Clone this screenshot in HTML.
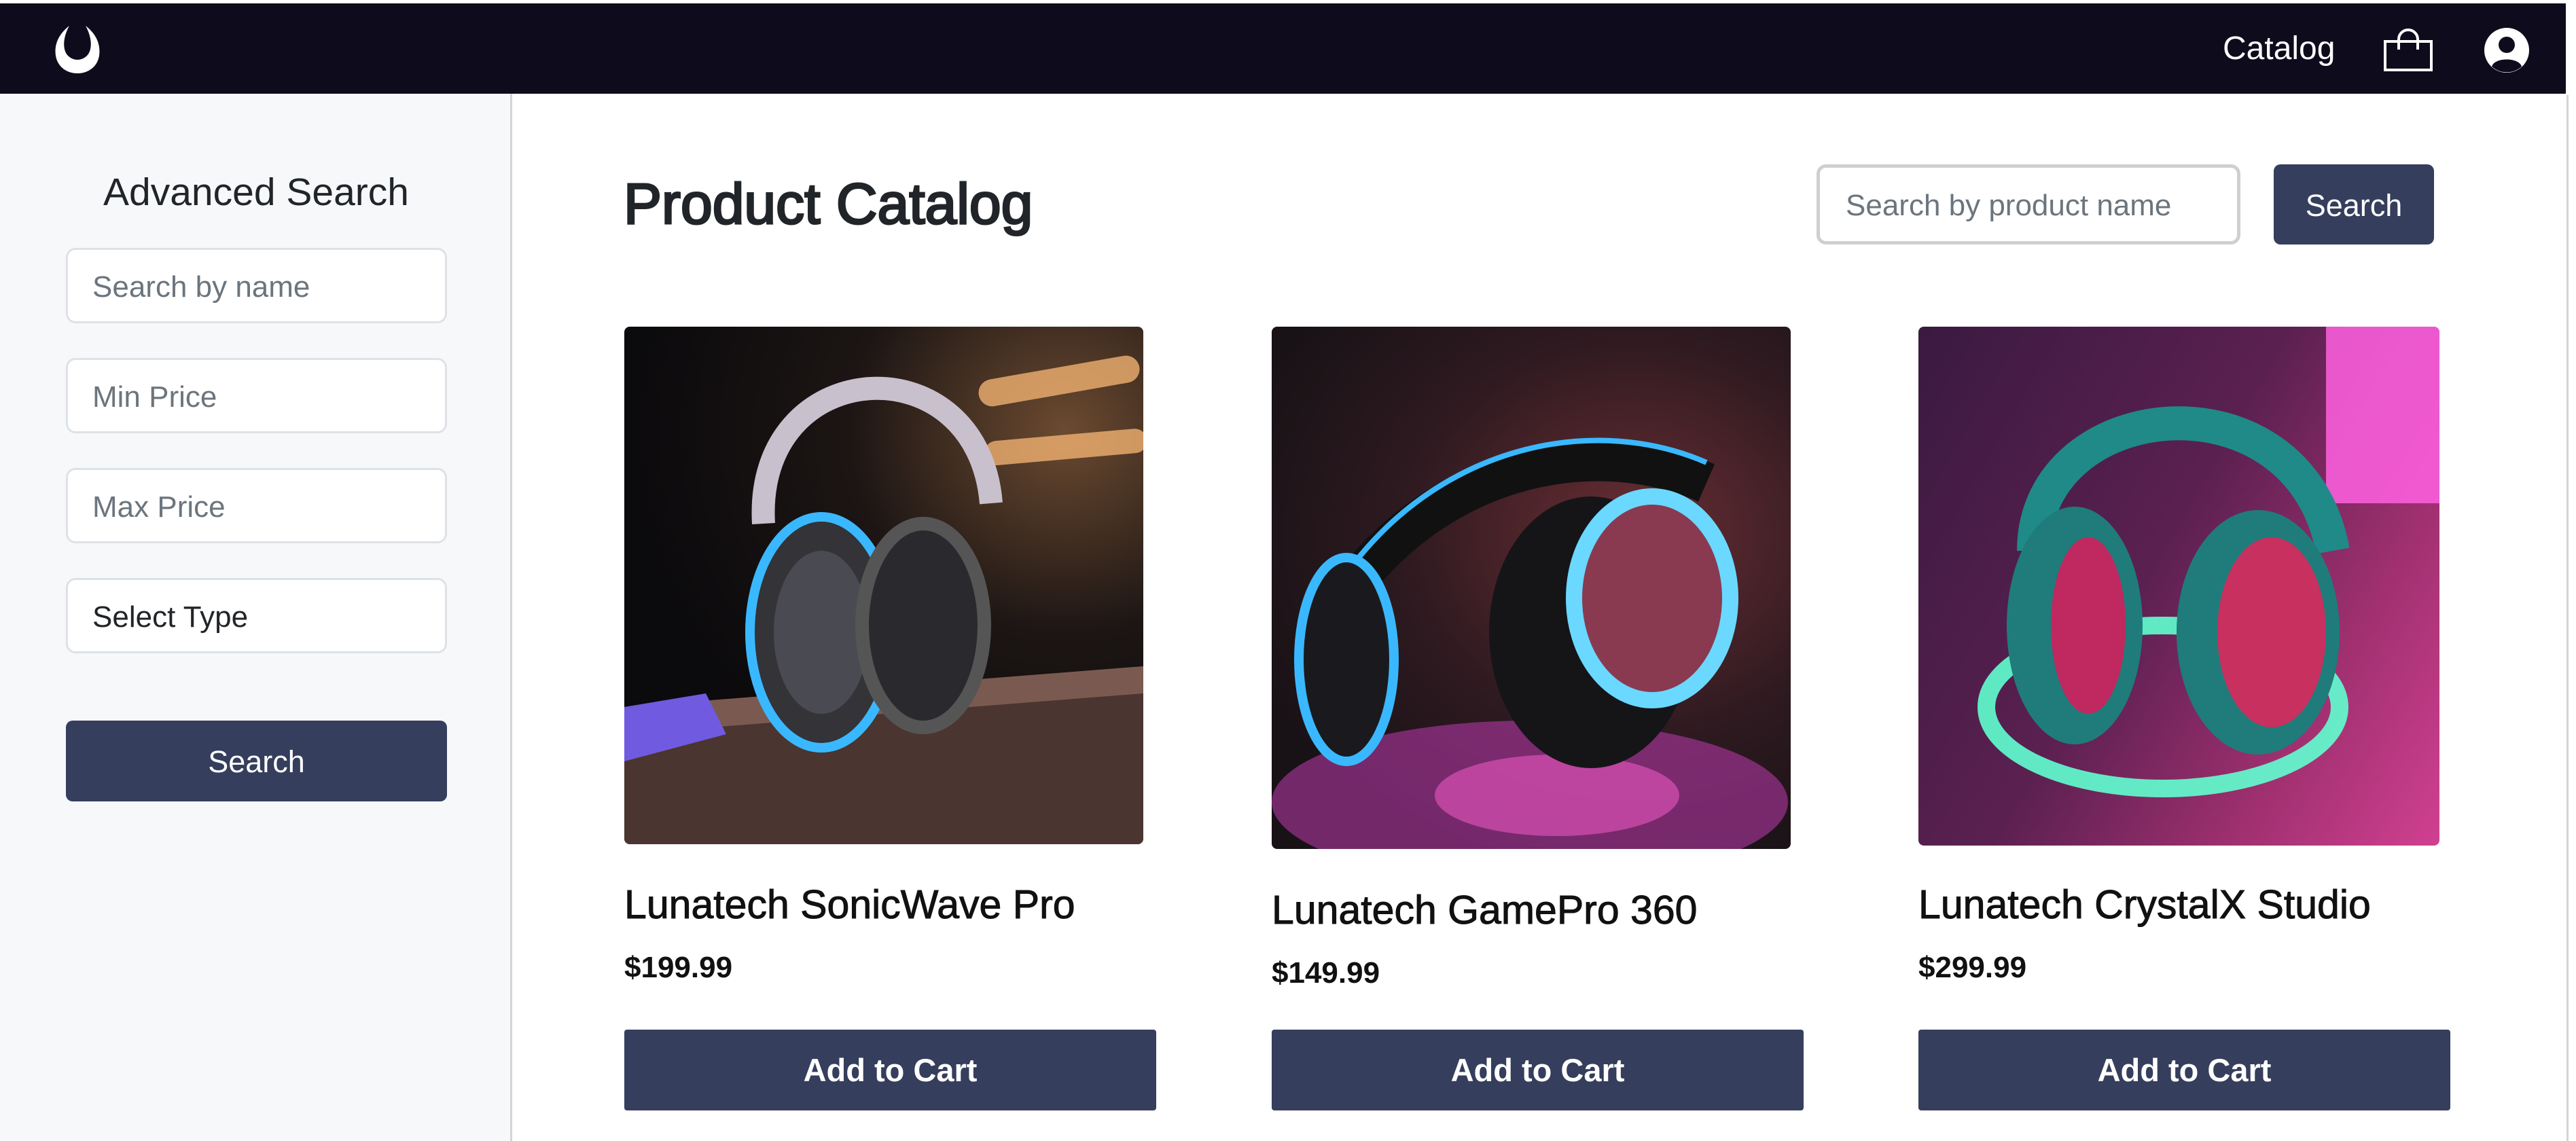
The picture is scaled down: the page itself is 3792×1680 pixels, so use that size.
<!DOCTYPE html>
<html><head><meta charset="utf-8"><style>
*{box-sizing:border-box;margin:0;padding:0}
body{width:3792px;height:1680px;overflow:hidden;background:#fff;font-family:"Liberation Sans",sans-serif;position:relative;color:#212529}
.nav{position:absolute;left:0;top:5px;width:3777px;height:133px;background:#0e0c1c}
.abs{position:absolute}
.side{position:absolute;left:0;top:138px;width:754px;height:1542px;background:#f7f8fa;border-right:3px solid #d4d4d4}
.inp{position:absolute;left:97px;width:561px;height:111px;background:#fff;border:3px solid #dee2e6;border-radius:14px;font-size:44px;color:#6c757d;padding-left:36px;line-height:109px}
.btn{position:absolute;background:#353e5c;color:#fff;border-radius:10px;text-align:center}
.img{position:absolute;border-radius:8px;overflow:hidden}
.title{position:absolute;font-size:59px;color:#111;white-space:nowrap;-webkit-text-stroke:1px #111}
.price{position:absolute;font-size:44px;font-weight:bold;color:#111}
.cart{position:absolute;width:783px;height:119px;background:#353e5c;color:#fff;font-size:47px;font-weight:bold;text-align:center;line-height:119px;border-radius:4px}
</style></head><body>
<div class="nav"></div>
<svg class="abs" style="left:78px;top:36px" width="72" height="74" viewBox="0 0 72 74"><path d="M24 2 C6 16 2 32 4 46 C7 64 22 72 36 72 C50 72 65 64 68 46 C70 32 66 16 48 2 C58 20 58 38 50 46 C42 54 30 54 22 46 C14 38 14 20 24 2Z" fill="#fff"/></svg>
<div class="abs" style="left:3272px;top:44px;font-size:48px;color:#fff">Catalog</div>
<svg class="abs" style="left:3508px;top:40px" width="74" height="66" viewBox="0 0 74 66"><rect x="3" y="21" width="68" height="42" fill="none" stroke="#fff" stroke-width="4"/><path d="M23 33 V18 A14 14 0 0 1 51 18 V33" fill="none" stroke="#fff" stroke-width="4"/></svg>
<svg class="abs" style="left:3656px;top:40px" width="68" height="68" viewBox="0 0 68 68"><circle cx="34" cy="34" r="33" fill="#fff"/><circle cx="34" cy="26" r="12" fill="#0e0c1c"/><path d="M12 58 C16 44 52 44 56 58 A33 33 0 0 1 12 58Z" fill="#0e0c1c"/></svg>
<div class="side"></div>
<div class="abs" style="left:0;width:754px;top:250px;text-align:center;font-size:57px;color:#212529">Advanced Search</div>
<div class="inp" style="top:365px">Search by name</div>
<div class="inp" style="top:527px">Min Price</div>
<div class="inp" style="top:689px">Max Price</div>
<div class="inp" style="top:851px;color:#212529">Select Type</div>
<div class="btn" style="left:97px;top:1061px;width:561px;height:119px;line-height:121px;font-size:45px">Search</div>
<div class="abs" style="left:918px;top:252px;font-size:84px;color:#212529;-webkit-text-stroke:3px #212529">Product Catalog</div>
<div class="abs" style="left:2674px;top:242px;width:624px;height:118px;border:5px solid #cfcfcf;border-radius:14px;font-size:44px;color:#6c757d;padding-left:38px;line-height:112px">Search by product name</div>
<div class="btn" style="left:3347px;top:242px;width:236px;height:118px;line-height:122px;font-size:45px">Search</div>

<div class="img" style="left:919px;top:481px;width:764px;height:762px;background:radial-gradient(ellipse at 85% 20%,#6b4a30 0%,#1c1514 35%,#0b0a0c 70%)">
<svg width="764" height="762" viewBox="0 0 764 762"><rect x="520" y="60" width="240" height="40" rx="20" fill="#f0b070" opacity=".8" transform="rotate(-10 640 80)"/><rect x="530" y="160" width="240" height="36" rx="18" fill="#f0b070" opacity=".8" transform="rotate(-5 640 180)"/><path d="M0 560 L764 500 L764 762 L0 762Z" fill="#4a3530"/><path d="M0 560 L764 500 L764 540 L0 600Z" fill="#7a5a50"/><path d="M0 560 L120 540 L150 600 L0 640Z" fill="#6f5ae0"/><path d="M205 290 C190 40 520 20 540 260" fill="none" stroke="#c8c0cc" stroke-width="34"/><ellipse cx="290" cy="450" rx="105" ry="170" fill="#333338" stroke="#3ab8ff" stroke-width="14"/><ellipse cx="290" cy="450" rx="70" ry="120" fill="#4a4a52"/><ellipse cx="440" cy="440" rx="90" ry="150" fill="#2a2a2e" stroke="#555" stroke-width="20"/></svg></div>

<div class="img" style="left:1872px;top:481px;width:764px;height:769px;background:radial-gradient(ellipse at 70% 40%,#6a2e34 0%,#2e1a20 45%,#181216 80%)">
<svg width="764" height="769" viewBox="0 0 764 769"><ellipse cx="380" cy="700" rx="380" ry="120" fill="#c03ab0" opacity=".55"/><ellipse cx="420" cy="690" rx="180" ry="60" fill="#ff5fd0" opacity=".5"/><path d="M120 380 C260 200 480 160 640 230" fill="none" stroke="#111" stroke-width="60"/><path d="M120 350 C260 170 480 130 640 200" fill="none" stroke="#3ab8ff" stroke-width="8"/><ellipse cx="110" cy="490" rx="70" ry="150" fill="#1a1a1e" stroke="#3ab8ff" stroke-width="14"/><ellipse cx="470" cy="450" rx="150" ry="200" fill="#151518"/><ellipse cx="560" cy="400" rx="115" ry="150" fill="#8a3a50" stroke="#6ad8ff" stroke-width="24"/></svg></div>

<div class="img" style="left:2824px;top:481px;width:767px;height:764px;background:linear-gradient(120deg,#3a1a40 0%,#5a2050 45%,#a03070 75%,#d04090 100%)">
<svg width="767" height="764" viewBox="0 0 767 764"><rect x="600" y="0" width="167" height="260" fill="#ff60e0" opacity=".85"/><ellipse cx="360" cy="560" rx="260" ry="120" fill="none" stroke="#60ffd0" stroke-width="26" opacity=".9"/><path d="M170 330 C170 100 560 60 610 330" fill="none" stroke="#1f8a88" stroke-width="50"/><ellipse cx="230" cy="440" rx="100" ry="175" fill="#1f7c7a"/><ellipse cx="250" cy="440" rx="55" ry="130" fill="#c02860"/><ellipse cx="500" cy="450" rx="120" ry="180" fill="#1f7c7a"/><ellipse cx="520" cy="450" rx="80" ry="140" fill="#c83060"/></svg></div>

<div class="title" style="left:919px;top:1298px">Lunatech SonicWave Pro</div>
<div class="price" style="left:919px;top:1400px">$199.99</div>
<div class="cart" style="left:919px;top:1516px">Add to Cart</div>
<div class="title" style="left:1872px;top:1306px">Lunatech GamePro 360</div>
<div class="price" style="left:1872px;top:1408px">$149.99</div>
<div class="cart" style="left:1872px;top:1516px">Add to Cart</div>
<div class="title" style="left:2824px;top:1298px">Lunatech CrystalX Studio</div>
<div class="price" style="left:2824px;top:1400px">$299.99</div>
<div class="cart" style="left:2824px;top:1516px">Add to Cart</div>
<div class="abs" style="left:3778px;top:140px;width:3px;height:1540px;background:#d4d4d4"></div>
</body></html>
